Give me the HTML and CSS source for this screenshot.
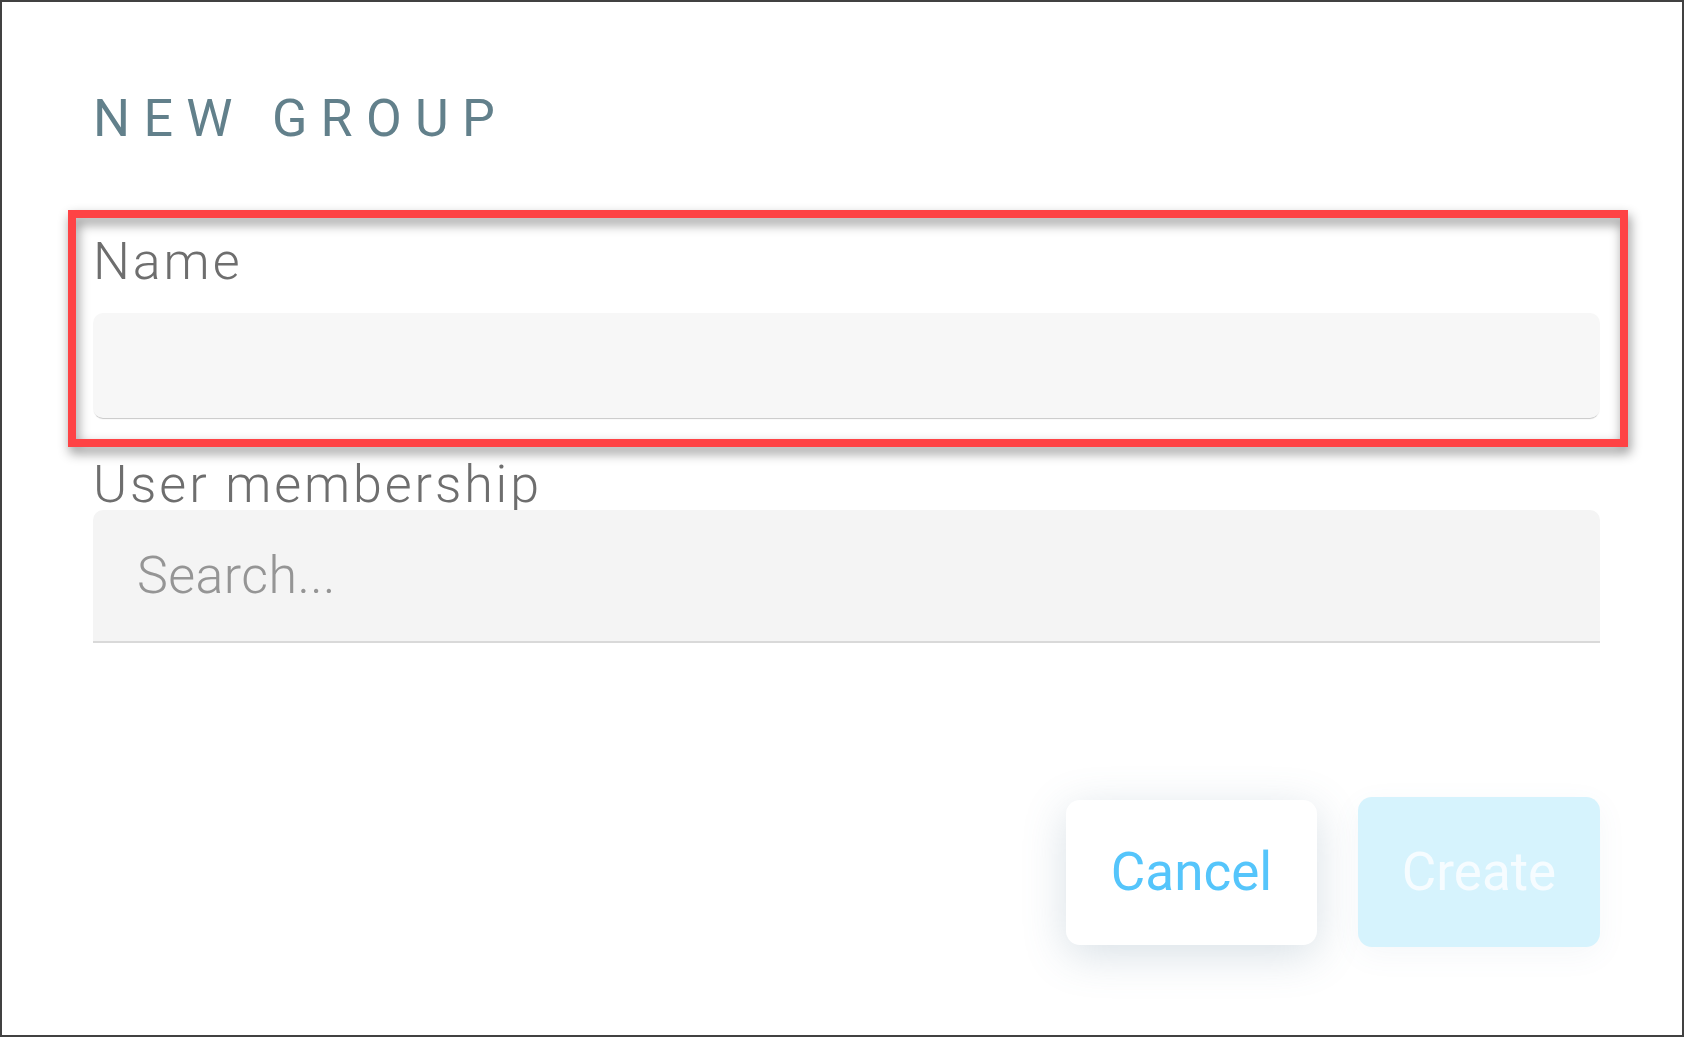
FILE: index.html
```html
<!DOCTYPE html>
<html lang="en">
<head>
  <meta charset="UTF-8" />
  <meta name="viewport" content="width=device-width, initial-scale=1" />
  <title>New group</title>
  <link rel="stylesheet" href="styles.css">
</head>
<body>
  <div class="frame">
    <div class="dialog">
      <h1 class="title">NEW GROUP</h1>

      <div class="field highlight">
        <label class="label" for="groupName">Name</label>
        <div class="input name-input" id="groupName"></div>
      </div>

      <div class="field">
        <label class="label member-label">User membership</label>
        <div class="input search-input">
          <span class="placeholder">Search...</span>
        </div>
      </div>

      <div class="actions">
        <button class="btn cancel">Cancel</button>
        <button class="btn create" disabled>Create</button>
      </div>
    </div>
  </div>
</body>
</html>
```

FILE: styles.css
```css
html, body {
  margin: 0;
  padding: 0;
  background: #ffffff;
}

body {
  font-family: Roboto, 'Noto Sans', sans-serif;
  color: #222;
}

.frame {
  box-sizing: border-box;
  height: 100vh;
  border: 2px solid #414141;
  padding: 87px 82px 0 91px;
}

.dialog {
  display: flex;
  flex-direction: column;
}

.title {
  margin: 0;
  font-size: 52px;
  line-height: 60px;
  font-weight: 400;
  letter-spacing: 13.3px;
  color: #62808b;
}

.field {
  position: relative;
  display: flex;
  flex-direction: column;
}

.highlight {
  margin-top: 87px;
}

.highlight::after {
  content: '';
  position: absolute;
  top: -26px;
  left: -25px;
  right: -28px;
  bottom: -29px;
  border: 8px solid #fe4345;
  filter: drop-shadow(2px 6px 6px rgba(0, 0, 0, 0.45));
  pointer-events: none;
}

.label {
  font-size: 52px;
  line-height: 52px;
  font-weight: 300;
  letter-spacing: 2.9px;
  color: #6e6e6e;
}

.input {
  box-sizing: border-box;
  background: #f7f7f7;
}

.name-input {
  margin-top: 25px;
  height: 105px;
  border-radius: 10px;
  box-shadow: 0 2px 1px -1px rgba(0, 0, 0, 0.22);
}

.member-label {
  margin-top: 41px;
  margin-bottom: -1px;
}

.search-input {
  height: 133px;
  background: #f4f4f4;
  border-radius: 10px 10px 0 0;
  border-bottom: 2px solid #d9d9d9;
  display: flex;
  align-items: center;
  padding-left: 44px;
}

.placeholder {
  font-size: 52px;
  font-weight: 300;
  letter-spacing: 0.4px;
  color: #959595;
}

.actions {
  display: flex;
  justify-content: flex-end;
  align-items: center;
  gap: 41px;
  margin-top: 154px;
}

.btn {
  font-family: Roboto, 'Noto Sans', sans-serif;
  font-size: 53px;
  font-weight: 400;
  border: none;
  border-radius: 14px;
  padding: 0;
  cursor: pointer;
}

.cancel {
  width: 251px;
  height: 145px;
  background: #ffffff;
  color: #55c5fb;
  box-shadow: 0 10px 44px rgba(90, 125, 150, 0.24);
}

.create {
  width: 242px;
  height: 150px;
  background: #d6f3fd;
  color: #f6fcff;
  box-shadow: 0 8px 30px rgba(90, 125, 150, 0.06);
  cursor: default;
}
```
